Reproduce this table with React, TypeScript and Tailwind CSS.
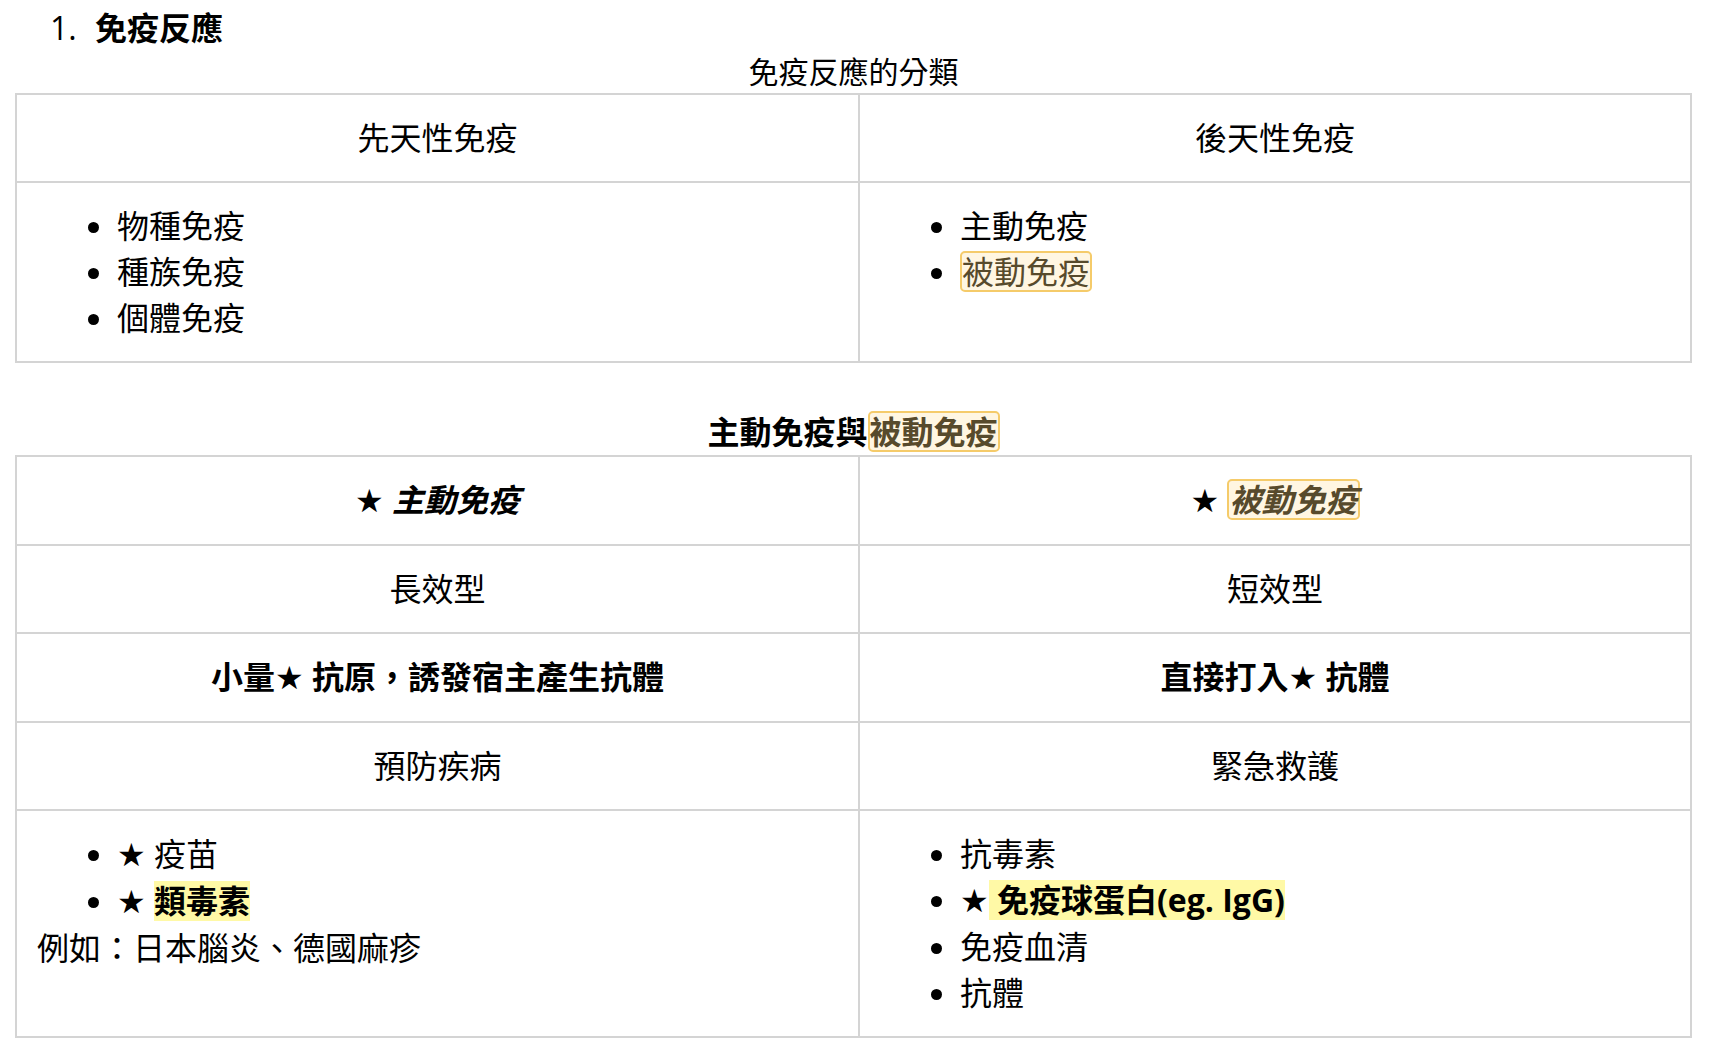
import React from "react";

const FONT = "font-['Open_Sans','Noto_Sans_CJK_TC',sans-serif]";
const cell = "border-r-2 border-b-2 border-[#d4d4d4] p-[20px] leading-[46px]";
const grid = "grid grid-cols-[843px_832px] border-l-2 border-t-2 border-[#d4d4d4]";

function Star() {
  return <span className="font-['DejaVu_Sans',sans-serif] font-normal not-italic">★</span>;
}

function Box({ children }: { children: React.ReactNode }) {
  return (
    <span className="inline-block border-2 border-[#f5cb6a] bg-[#fff6e2] text-[#574a2c] rounded-[5px] leading-[37px] px-0">
      {children}
    </span>
  );
}

function Mark({ children }: { children: React.ReactNode }) {
  return <span className="inline-block bg-[#fff9a6] leading-[40px] font-bold whitespace-pre">{children}</span>;
}

export default function App() {
  return (
    <div className={`${FONT} text-black bg-white min-h-[1044px] w-[1718px] text-[32px]`}>
      <div className="ml-[15px] w-[1677px] pt-[5px]">
        <div className="flex leading-[46px] pl-[35px]">
          <span className="w-[45px]">1.</span>
          <span className="font-bold">免疫反應</span>
        </div>
        <div className="text-center text-[30px] leading-[42px]">免疫反應的分類</div>
        <div className={grid}>
          <div className={`${cell} text-center`}>先天性免疫</div>
          <div className={`${cell} text-center`}>後天性免疫</div>
          <div className={cell}>
            <ul className="list-disc pl-[80px]">
              <li>物種免疫</li>
              <li>種族免疫</li>
              <li>個體免疫</li>
            </ul>
          </div>
          <div className={cell}>
            <ul className="list-disc pl-[80px]">
              <li>主動免疫</li>
              <li>
                <Box>被動免疫</Box>
              </li>
            </ul>
          </div>
        </div>

        <div className="mt-[46px] text-center font-bold leading-[46px]">
          主動免疫與<Box>被動免疫</Box>
        </div>
        <div className={grid}>
          <div className={`${cell} text-center font-bold italic`}>
            <Star /> 主動免疫
          </div>
          <div className={`${cell} text-center font-bold italic`}>
            <Star /> <Box>被動免疫</Box>
          </div>
          <div className={`${cell} text-center`}>長效型</div>
          <div className={`${cell} text-center`}>短效型</div>
          <div className={`${cell} text-center font-bold`}>
            小量<Star /> 抗原，誘發宿主產生抗體
          </div>
          <div className={`${cell} text-center font-bold`}>
            直接打入<Star /> 抗體
          </div>
          <div className={`${cell} text-center`}>預防疾病</div>
          <div className={`${cell} text-center`}>緊急救護</div>
          <div className={cell}>
            <ul className="list-disc pl-[80px]">
              <li>
                <Star /> 疫苗
              </li>
              <li>
                <Star /> <Mark>類毒素</Mark>
              </li>
            </ul>
            <div>例如：日本腦炎、德國麻疹</div>
          </div>
          <div className={cell}>
            <ul className="list-disc pl-[80px]">
              <li>抗毒素</li>
              <li>
                <Star />
                <Mark>{" 免疫球蛋白(eg. IgG)"}</Mark>
              </li>
              <li>免疫血清</li>
              <li>抗體</li>
            </ul>
          </div>
        </div>
      </div>
    </div>
  );
}
